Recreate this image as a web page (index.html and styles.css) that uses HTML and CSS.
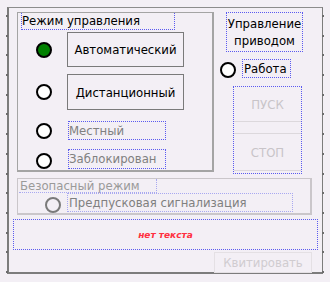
FILE: index.html
```html
<!DOCTYPE html>
<html lang="ru">
<head>
<meta charset="utf-8">
<title>Режим управления</title>
<link rel="stylesheet" href="styles.css">
</head>
<body>
<div class="frame">
  <div class="top">
    <div class="group mode">
      <div class="gtitle">Режим управления</div>
      <div class="row r1"><span class="radio on"></span><div class="btn">Автоматический</div></div>
      <div class="row r2"><span class="radio"></span><div class="btn">Дистанционный</div></div>
      <div class="row r3"><span class="radio"></span><div class="lbl dis">Местный</div></div>
      <div class="row r4"><span class="radio"></span><div class="lbl dis">Заблокирован</div></div>
    </div>
    <div class="side">
      <div class="drive">Управление<br>приводом</div>
      <div class="work"><span class="radio"></span><span class="wlbl">Работа</span></div>
      <div class="cmds">
        <div class="cmd start">ПУСК</div>
        <div class="cmd stop">СТОП</div>
      </div>
    </div>
  </div>
  <div class="group safe">
    <div class="stitle">Безопасный режим</div>
    <div class="srow"><span class="radio gray"></span><div class="slbl">Предпусковая сигнализация</div></div>
  </div>
  <div class="note">нет текста</div>
  <div class="ack">Квитировать</div>
</div>
</body>
</html>
```
FILE: styles.css
```css
html, body {
  margin: 0;
  padding: 0;
  background: #f3eff5;
}
body {
  font-family: "DejaVu Sans Condensed", "DejaVu Sans", sans-serif;
  font-stretch: condensed;
  font-size: 13px;
  color: #000;
  width: 330px;
  height: 282px;
  overflow: hidden;
}
.frame {
  position: relative;
  margin: 7px 0 0 7px;
  width: 313px;
  height: 260px;
  padding-top: 4px;
  border-top: 1px solid #8c8c8c;
  border-left: 2px solid #7c7c7c;
  border-right: 1px solid #7c7c7c;
  border-bottom: 2px solid #7c7c7c;
}
.frame::before,
.frame::after {
  content: "";
  position: absolute;
  top: 7px;
  width: 2px;
  height: 258px;
  background: repeating-linear-gradient(to bottom, #6c6c6c 0 2px, transparent 2px 19.7px);
}
.frame::before { left: -3px; }
.frame::after { right: -2px; }

.top {
  display: flex;
  margin-left: 8px;
}
.group {
  box-sizing: border-box;
  border: 1px solid #a4a4a4;
  border-right-width: 2px;
  border-bottom-width: 2px;
}
.mode {
  width: 197px;
  height: 160px;
}
.gtitle {
  box-sizing: border-box;
  margin-left: 3px;
  width: 154px;
  height: 17px;
  padding-left: 0;
  line-height: 15px;
  border: 1px dotted #5a5af0;
  border-top: none;
}
.row {
  display: flex;
  align-items: center;
}
.radio {
  box-sizing: border-box;
  flex: none;
  width: 16px;
  height: 16px;
  border: 2px solid #000;
  border-radius: 50%;
  background: #fff;
}
.radio.on { background: #008000; }
.radio.gray { border-color: #7a7a7a; background: transparent; }
.row .radio { margin-left: 18px; }
.btn {
  box-sizing: border-box;
  margin-left: 15px;
  width: 117px;
  height: 100%;
  border: 1px solid #7a7a7a;
  display: flex;
  align-items: center;
  justify-content: center;
}
.r1 { margin-top: 2px; height: 35px; }
.r2 { margin-top: 7px; height: 36px; }
.r3 { margin-top: 11px; height: 19px; }
.r4 { margin-top: 9px; height: 20px; }
.r4 .radio { margin-top: 4px; }
.lbl {
  box-sizing: border-box;
  margin-left: 16px;
  width: 98px;
  height: 100%;
  padding-left: 0;
  line-height: 17px;
  border: 1px dotted #5a5af0;
}
.dis { color: #808080; }

.side {
  margin-left: 6px;
  width: 83px;
}
.drive {
  box-sizing: border-box;
  margin-left: 6px;
  width: 77px;
  height: 40px;
  border: 1px dotted #5a5af0;
  display: flex;
  align-items: center;
  justify-content: center;
  text-align: center;
  line-height: 17px;
}
.work {
  display: flex;
  align-items: center;
  margin-top: 7px;
  height: 19px;
}
.work .radio { margin-top: 3px; }
.wlbl {
  box-sizing: border-box;
  margin-left: 6px;
  width: 49px;
  height: 100%;
  padding-left: 1px;
  line-height: 17px;
  border: 1px dotted #5a5af0;
}
.cmds {
  box-sizing: border-box;
  margin: 8px 0 0 13px;
  width: 69px;
  height: 88px;
  border: 1px dotted #5a5af0;
}
.cmd {
  box-sizing: border-box;
  display: flex;
  align-items: center;
  justify-content: center;
  color: #c8c4c8;
}
.start {
  height: 35px;
  border-bottom: 1px solid #dcd8dc;
}
.stop {
  margin-top: 11px;
  height: 38px;
  border-top: 1px solid #dcd8dc;
  border-bottom: 1px solid #dcd8dc;
}

.safe {
  margin: 4px 0 0 8px;
  width: 295px;
  height: 37px;
  border-color: #cac6ca;
}
.stitle {
  box-sizing: border-box;
  margin-left: 1px;
  width: 138px;
  height: 14px;
  padding-left: 1px;
  line-height: 13px;
  color: #9a9a9a;
  border-right: 1px dotted #a8a8f0;
  border-bottom: 1px dotted #a8a8f0;
}
.srow {
  display: flex;
  align-items: center;
  height: 19px;
}
.srow .radio {
  margin-left: 27px;
  margin-top: 5px;
}
.slbl {
  box-sizing: border-box;
  margin-left: 6px;
  width: 226px;
  height: 100%;
  padding-left: 1px;
  line-height: 17px;
  color: #808080;
  border: 1px dotted #a8a8f0;
}
.note {
  box-sizing: border-box;
  margin: 4px 0 0 4px;
  width: 305px;
  height: 31px;
  border: 1px dotted #5a5af0;
  display: flex;
  align-items: center;
  justify-content: center;
  color: #ff3040;
  font-family: "DejaVu Sans", sans-serif;
  font-stretch: normal;
  font-size: 9px;
  font-weight: bold;
  font-style: italic;
}
.ack {
  box-sizing: border-box;
  margin: 2px 0 0 205px;
  width: 98px;
  height: 21px;
  border: 1px solid #e4e0e4;
  display: flex;
  align-items: center;
  justify-content: center;
  color: #d0ccd0;
}
```
